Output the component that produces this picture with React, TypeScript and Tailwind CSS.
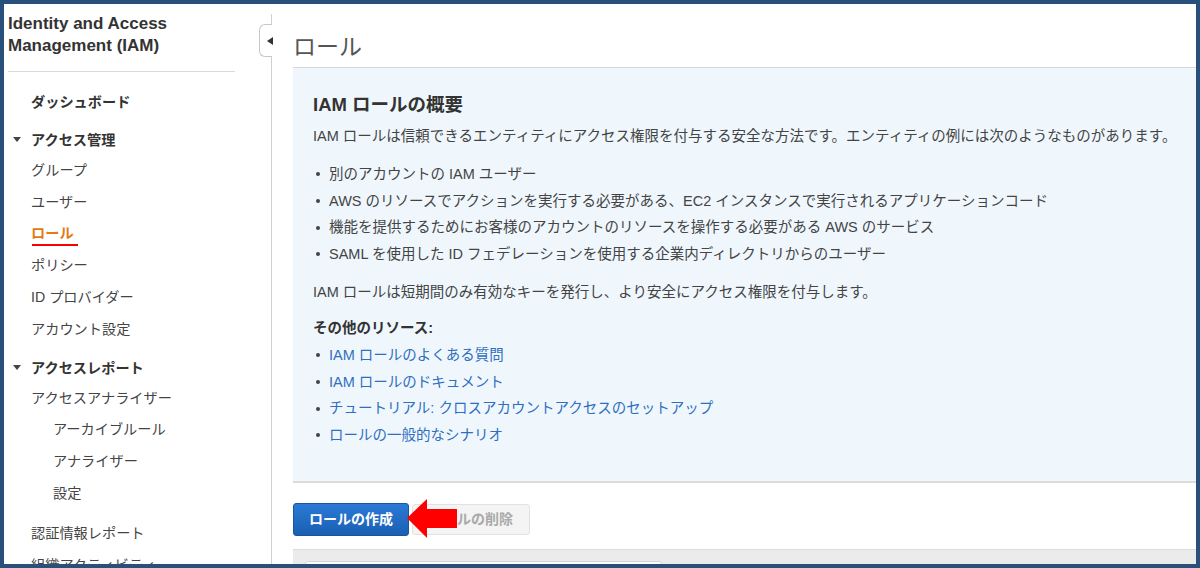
import { ReactNode } from "react";

type NavItem = {
  label: string;
  kind: "item" | "head" | "sub";
  active?: boolean;
  bold?: boolean;
  mt?: string;
};

const navItems: NavItem[] = [
  { label: "ダッシュボード", kind: "item", bold: true, mt: "mt-[15px]" },
  { label: "アクセス管理", kind: "head", mt: "mt-[6px]" },
  { label: "グループ", kind: "item" },
  { label: "ユーザー", kind: "item" },
  { label: "ロール", kind: "item", active: true },
  { label: "ポリシー", kind: "item" },
  { label: "ID プロバイダー", kind: "item" },
  { label: "アカウント設定", kind: "item" },
  { label: "アクセスレポート", kind: "head", mt: "mt-[7px]" },
  { label: "アクセスアナライザー", kind: "item" },
  { label: "アーカイブルール", kind: "sub" },
  { label: "アナライザー", kind: "sub" },
  { label: "設定", kind: "sub" },
  { label: "認証情報レポート", kind: "item", mt: "mt-[8px]" },
  { label: "組織アクティビティ", kind: "item" },
];

const examples = [
  "別のアカウントの IAM ユーザー",
  "AWS のリソースでアクションを実行する必要がある、EC2 インスタンスで実行されるアプリケーションコード",
  "機能を提供するためにお客様のアカウントのリソースを操作する必要がある AWS のサービス",
  "SAML を使用した ID フェデレーションを使用する企業内ディレクトリからのユーザー",
];

const resources = [
  "IAM ロールのよくある質問",
  "IAM ロールのドキュメント",
  "チュートリアル: クロスアカウントアクセスのセットアップ",
  "ロールの一般的なシナリオ",
];

function Bullet({ children, className }: { children: ReactNode; className?: string }) {
  return (
    <li className={`flex items-center leading-[26.7px] ${className || ""}`}>
      <span className="ml-[3px] mr-[9px] h-[4px] w-[4px] shrink-0 rounded-full bg-[#444]" />
      <span>{children}</span>
    </li>
  );
}

function Sidebar() {
  return (
    <div className="w-[267px] shrink-0 bg-white">
      <div className="pl-[4px] pt-[9px] text-[17px] font-bold leading-[22px] text-[#333]">
        Identity and Access
        <br />
        Management (IAM)
      </div>
      <div className="ml-[4px] mt-[14px] h-px w-[227px] bg-[#d9d9d9]" />

      <ul className="text-[14.2px] text-[#444]">
        {navItems.map((item) => {
          if (item.kind === "head") {
            return (
              <li
                key={item.label}
                className={`flex items-center pl-[9px] font-bold leading-[30px] text-[#333] ${item.mt || ""}`}
              >
                <span className="flex w-[18px] items-center">
                  <span className="h-0 w-0 border-x-[4px] border-t-[5px] border-x-transparent border-t-[#444]" />
                </span>
                {item.label}
              </li>
            );
          }

          return (
            <li
              key={item.label}
              className={`leading-[31.8px] ${item.kind === "sub" ? "pl-[49px]" : "pl-[27px]"} ${item.mt || ""} ${item.bold ? "font-bold text-[#333]" : ""}`}
            >
              {item.active ? (
                <span className="relative font-bold text-[#e47911]">
                  {item.label}
                  <span className="absolute -right-[4px] left-[1px] top-[19px] h-[2px] bg-[#ff0000]" />
                </span>
              ) : (
                item.label
              )}
            </li>
          );
        })}
      </ul>
    </div>
  );
}

export default function App() {
  return (
    <div
      className="flex h-[568px] w-[1200px] overflow-hidden border-4 border-[#28507b] bg-white text-[#444]"
      style={{ fontFamily: '"Liberation Sans", "Noto Sans CJK JP", sans-serif' }}
    >
      <Sidebar />

      <div className="relative mt-[10px] w-px shrink-0 bg-[#d0d0d0]">
        <div className="absolute -left-[12px] top-[10px] flex h-[33px] w-[13px] items-center rounded-l-[6px] border border-r-0 border-[#c8c8c8] bg-white pl-[7px]">
          <span className="h-0 w-0 border-y-[4px] border-r-[6px] border-y-transparent border-r-[#333]" />
        </div>
      </div>

      <div className="flex min-w-0 flex-1 flex-col overflow-hidden pl-[21px]">
        <h1 className="pt-[28px] text-[23px] font-normal leading-[30px] text-[#555]">ロール</h1>

        <div className="mt-[5px] border-t border-b-2 border-t-[#d5d9dd] border-b-[#dcdcdc] bg-[#eff7fd] pb-[32px] pl-[20px] pt-[23px]">
          <h2 className="text-[18.5px] font-bold leading-[28px] text-[#333]">IAM ロールの概要</h2>
          <p className="mt-[7px] text-[14.5px] leading-[20px]">
            IAM ロールは信頼できるエンティティにアクセス権限を付与する安全な方法です。エンティティの例には次のようなものがあります。
          </p>

          <ul className="mt-[15px] text-[14.5px]">
            {examples.map((text) => (
              <Bullet key={text}>{text}</Bullet>
            ))}
          </ul>

          <p className="mt-[14px] text-[14.5px] leading-[20px]">
            IAM ロールは短期間のみ有効なキーを発行し、より安全にアクセス権限を付与します。
          </p>

          <div className="mt-[16px] text-[14.5px] font-bold leading-[20px] text-[#333]">その他のリソース:</div>
          <ul className="mt-[4px] text-[14.5px]">
            {resources.map((text) => (
              <Bullet key={text} className="text-[#2f6fbf]">
                {text}
              </Bullet>
            ))}
          </ul>
        </div>

        <div className="relative mt-[20px] flex items-center gap-[3px]">
          <button className="h-[33px] w-[116px] rounded-[3px] border border-[#1b559c] bg-gradient-to-b from-[#2a7ad6] to-[#1a5fb3] text-[14px] font-bold text-white">
            ロールの作成
          </button>
          <button
            disabled
            className="h-[31px] w-[118px] rounded-[3px] border border-[#e2e2e2] bg-[#f4f4f4] text-[14px] font-bold text-[#aaa]"
          >
            ロールの削除
          </button>

          <svg
            className="absolute left-[110px] top-[-6px]"
            width="60"
            height="46"
            viewBox="0 0 60 46"
          >
            <polygon points="4,21 24,2 24,12 54,12 54,31 24,31 24,41" fill="#ff0000" />
          </svg>
        </div>

        <div className="mt-[13px] flex-1 border-t border-[#dcdcdc] bg-[#ebebeb] pl-[12px] pt-[11px]">
          <div className="h-[20px] w-[357px] rounded-t-[3px] border border-[#d5d5d5] bg-white" />
        </div>
      </div>
    </div>
  );
}
